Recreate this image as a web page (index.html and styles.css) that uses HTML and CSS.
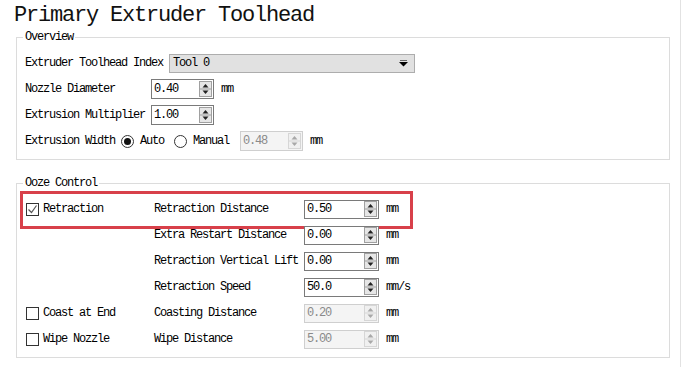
FILE: index.html
```html
<!DOCTYPE html>
<html>
<head>
<meta charset="utf-8">
<link rel="stylesheet" href="styles.css">
</head>
<body>
<div class="window">
  <h1 class="title">Primary Extruder Toolhead</h1>

  <fieldset class="group overview">
    <legend>Overview</legend>
    <div class="row">
      <span class="lbl">Extruder Toolhead Index</span>
      <div class="combo">
        <span>Tool 0</span>
        <svg class="combo-arrow" width="9" height="7" viewBox="0 0 9 7"><path d="M1 0.5h7" stroke="#666" stroke-width="1"/><path d="M0 2h9L4.5 6.5z" fill="#000"/></svg>
      </div>
    </div>
    <div class="row">
      <span class="lbl fixed">Nozzle Diameter</span>
      <div class="spin small">
        <span class="val">0.40</span>
        <svg class="arrows" width="13" height="16" viewBox="0 0 13 16"><rect x="0.5" y="0.5" width="12" height="15" fill="#e6e6e6" stroke="#a0a0a0"/><line x1="1" y1="8" x2="12" y2="8" stroke="#a0a0a0"/><path d="M3.5 6.5h6l-3-3.5z" fill="#222"/><path d="M3.5 9.5h6l-3 3.5z" fill="#222"/></svg>
      </div>
      <span class="unit">mm</span>
    </div>
    <div class="row">
      <span class="lbl fixed">Extrusion Multiplier</span>
      <div class="spin small">
        <span class="val">1.00</span>
        <svg class="arrows" width="13" height="16" viewBox="0 0 13 16"><rect x="0.5" y="0.5" width="12" height="15" fill="#e6e6e6" stroke="#a0a0a0"/><line x1="1" y1="8" x2="12" y2="8" stroke="#a0a0a0"/><path d="M3.5 6.5h6l-3-3.5z" fill="#222"/><path d="M3.5 9.5h6l-3 3.5z" fill="#222"/></svg>
      </div>
    </div>
    <div class="row">
      <span class="lbl">Extrusion Width</span>
      <span class="radio checked"></span><span class="opt">Auto</span>
      <span class="radio"></span><span class="opt">Manual</span>
      <div class="spin small disabled">
        <span class="val">0.48</span>
        <svg class="arrows" width="13" height="16" viewBox="0 0 13 16"><rect x="0.5" y="0.5" width="12" height="15" fill="#f0f0f0" stroke="#d6d6d6"/><line x1="1" y1="8" x2="12" y2="8" stroke="#d6d6d6"/><path d="M3.5 6.5h6l-3-3.5z" fill="#a8a8a8"/><path d="M3.5 9.5h6l-3 3.5z" fill="#a8a8a8"/></svg>
      </div>
      <span class="unit">mm</span>
    </div>
  </fieldset>

  <fieldset class="group ooze">
    <legend>Ooze Control</legend>
    <div class="grid-row highlighted">
      <div class="check-cell"><span class="check checked"><svg width="11" height="11" viewBox="0 0 11 11"><path d="M1.5 5.5l3 3 5-7" fill="none" stroke="#555" stroke-width="1.2"/></svg></span><span>Retraction</span></div>
      <span class="lbl">Retraction Distance</span>
      <div class="spin wide">
        <span class="val">0.50</span>
        <svg class="arrows" width="13" height="16" viewBox="0 0 13 16"><rect x="0.5" y="0.5" width="12" height="15" fill="#e6e6e6" stroke="#a0a0a0"/><line x1="1" y1="8" x2="12" y2="8" stroke="#a0a0a0"/><path d="M3.5 6.5h6l-3-3.5z" fill="#222"/><path d="M3.5 9.5h6l-3 3.5z" fill="#222"/></svg>
      </div>
      <span class="unit">mm</span>
    </div>
    <div class="grid-row">
      <div class="check-cell"></div>
      <span class="lbl">Extra Restart Distance</span>
      <div class="spin wide">
        <span class="val">0.00</span>
        <svg class="arrows" width="13" height="16" viewBox="0 0 13 16"><rect x="0.5" y="0.5" width="12" height="15" fill="#e6e6e6" stroke="#a0a0a0"/><line x1="1" y1="8" x2="12" y2="8" stroke="#a0a0a0"/><path d="M3.5 6.5h6l-3-3.5z" fill="#222"/><path d="M3.5 9.5h6l-3 3.5z" fill="#222"/></svg>
      </div>
      <span class="unit">mm</span>
    </div>
    <div class="grid-row">
      <div class="check-cell"></div>
      <span class="lbl">Retraction Vertical Lift</span>
      <div class="spin wide">
        <span class="val">0.00</span>
        <svg class="arrows" width="13" height="16" viewBox="0 0 13 16"><rect x="0.5" y="0.5" width="12" height="15" fill="#e6e6e6" stroke="#a0a0a0"/><line x1="1" y1="8" x2="12" y2="8" stroke="#a0a0a0"/><path d="M3.5 6.5h6l-3-3.5z" fill="#222"/><path d="M3.5 9.5h6l-3 3.5z" fill="#222"/></svg>
      </div>
      <span class="unit">mm</span>
    </div>
    <div class="grid-row">
      <div class="check-cell"></div>
      <span class="lbl">Retraction Speed</span>
      <div class="spin wide">
        <span class="val">50.0</span>
        <svg class="arrows" width="13" height="16" viewBox="0 0 13 16"><rect x="0.5" y="0.5" width="12" height="15" fill="#e6e6e6" stroke="#a0a0a0"/><line x1="1" y1="8" x2="12" y2="8" stroke="#a0a0a0"/><path d="M3.5 6.5h6l-3-3.5z" fill="#222"/><path d="M3.5 9.5h6l-3 3.5z" fill="#222"/></svg>
      </div>
      <span class="unit">mm/s</span>
    </div>
    <div class="grid-row">
      <div class="check-cell"><span class="check"></span><span>Coast at End</span></div>
      <span class="lbl">Coasting Distance</span>
      <div class="spin wide disabled">
        <span class="val">0.20</span>
        <svg class="arrows" width="13" height="16" viewBox="0 0 13 16"><rect x="0.5" y="0.5" width="12" height="15" fill="#f0f0f0" stroke="#d6d6d6"/><line x1="1" y1="8" x2="12" y2="8" stroke="#d6d6d6"/><path d="M3.5 6.5h6l-3-3.5z" fill="#a8a8a8"/><path d="M3.5 9.5h6l-3 3.5z" fill="#a8a8a8"/></svg>
      </div>
      <span class="unit">mm</span>
    </div>
    <div class="grid-row">
      <div class="check-cell"><span class="check"></span><span>Wipe Nozzle</span></div>
      <span class="lbl">Wipe Distance</span>
      <div class="spin wide disabled">
        <span class="val">5.00</span>
        <svg class="arrows" width="13" height="16" viewBox="0 0 13 16"><rect x="0.5" y="0.5" width="12" height="15" fill="#f0f0f0" stroke="#d6d6d6"/><line x1="1" y1="8" x2="12" y2="8" stroke="#d6d6d6"/><path d="M3.5 6.5h6l-3-3.5z" fill="#a8a8a8"/><path d="M3.5 9.5h6l-3 3.5z" fill="#a8a8a8"/></svg>
      </div>
      <span class="unit">mm</span>
    </div>
  </fieldset>
</div>
</body>
</html>
```

FILE: styles.css
```css
* { box-sizing: border-box; }

html, body {
  margin: 0;
  padding: 0;
  background: #ffffff;
}

body {
  font-family: "Liberation Mono", "DejaVu Sans Mono", monospace;
  font-size: 12px;
  letter-spacing: -1.2px;
  color: #000;
}

.window {
  width: 681px;
  height: 367px;
  border-right: 1px solid #e2e2e2;
  overflow: hidden;
}

.title {
  margin: 0;
  height: 30px;
  padding: 1px 0 0 14px;
  font-size: 22px;
  line-height: 30px;
  font-weight: normal;
  letter-spacing: -1.2px;
  color: #111;
}

.group {
  margin: 0 0 0 16px;
  width: 654px;
  min-inline-size: 0;
  border: 1px solid #dcdcdc;
  padding: 6px 8px 5px 8px;
}

.group legend {
  padding: 0 2px;
  margin-left: -2px;
  line-height: 14px;
  height: 14px;
}

.ooze {
  margin-top: 16px;
}

.row {
  display: flex;
  align-items: center;
  height: 26px;
}

.lbl {
  white-space: nowrap;
}

.lbl.fixed {
  width: 126px;
}

.combo {
  margin-left: 6px;
  width: 246px;
  height: 19px;
  background: #e1e1e1;
  border: 1px solid #adadad;
  display: flex;
  align-items: center;
  justify-content: space-between;
  padding: 0 6px 0 3px;
}

.combo-arrow {
  display: block;
}

.spin {
  height: 20px;
  border: 1px solid #7a7a7a;
  background: #fff;
  display: flex;
  align-items: center;
  justify-content: space-between;
  padding: 0 1px 0 2px;
}

.spin.small {
  width: 63px;
}

.spin.wide {
  width: 75px;
  height: 19px;
  padding-right: 1px;
}

.spin .arrows {
  display: block;
  margin-right: 0;
}

.spin.disabled {
  background: #f4f4f4;
  border-color: #cfcfcf;
  color: #8a8a8a;
}

.unit {
  margin-left: 7px;
}

.radio {
  width: 13px;
  height: 13px;
  border: 1px solid #333;
  border-radius: 50%;
  background: #fff;
  display: flex;
  align-items: center;
  justify-content: center;
  margin-left: 6px;
}

.radio.checked::before {
  content: "";
  width: 7px;
  height: 7px;
  border-radius: 50%;
  background: #111;
}

.opt {
  margin-left: 6px;
}

.opt + .radio {
  margin-left: 10px;
}

.radio + .opt + .spin {
  margin-left: 11px;
}

.grid-row {
  position: relative;
  display: grid;
  grid-template-columns: 129px 150px 75px auto;
  align-items: center;
  height: 26px;
}

.grid-row .unit {
  margin-left: 7px;
}

.check-cell {
  display: flex;
  align-items: center;
  padding-left: 1px;
}

.check {
  width: 13px;
  height: 13px;
  border: 1px solid #333;
  background: #fff;
  margin-right: 4px;
  display: flex;
  align-items: center;
  justify-content: center;
}

.check svg {
  display: block;
}

.highlighted::after {
  content: "";
  position: absolute;
  left: -5px;
  top: -5px;
  width: 387px;
  height: 32px;
  border: 3px solid #d8404a;
  pointer-events: none;
}
```
